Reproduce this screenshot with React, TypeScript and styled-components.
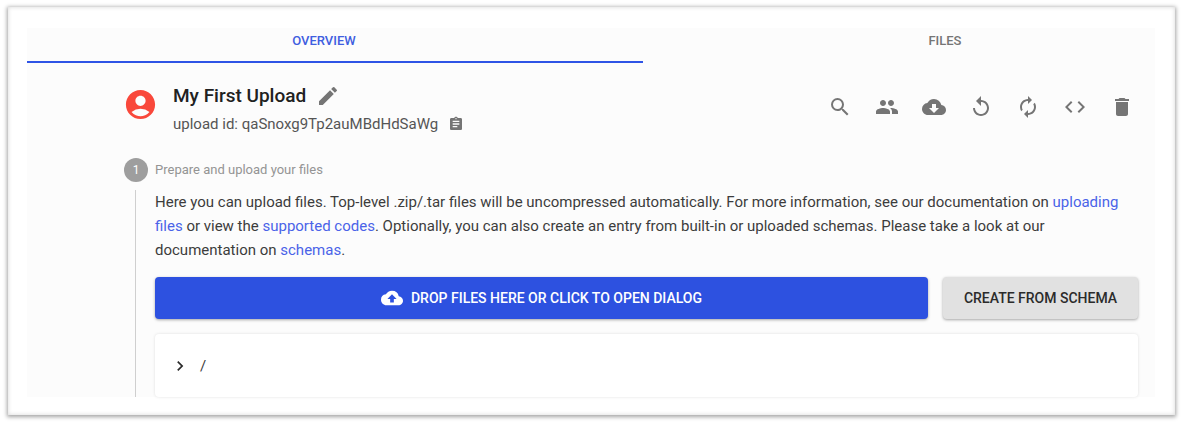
import React from 'react';
import styled, { createGlobalStyle } from 'styled-components';
import {
  MdAccountCircle,
  MdAssignment,
  MdAutorenew,
  MdChevronRight,
  MdCloudDownload,
  MdCloudUpload,
  MdCode,
  MdDelete,
  MdEdit,
  MdPeople,
  MdReplay,
  MdSearch,
} from 'react-icons/md';

const GlobalStyle = createGlobalStyle`
  * { box-sizing: border-box; }
  body {
    margin: 0;
    background: #fff;
    color: #3c3c3c;
    font-family: Roboto, "Noto Sans", sans-serif;
  }
  button { font-family: inherit; cursor: pointer; }
`;

const Shell = styled.div`
  padding: 7px 8px 10px;
`;

const Frame = styled.div`
  padding: 21px 20px 18px 19px;
  background: #fff;
  box-shadow: 0 1px 4px 1px #a4a4a4, inset 0 0 4px #d8d8d8;
`;

const Page = styled.main`
  background: #fcfcfc;
`;

const Tabs = styled.nav`
  display: flex;
`;

const Tab = styled.button<{ $active?: boolean }>`
  width: ${p => (p.$active ? '54.6%' : '45.4%')};
  height: 35px;
  padding: ${p => (p.$active ? '0 22px 8px 0' : '0 0 8px 92px')};
  border: 0;
  border-bottom: 2px solid ${p => (p.$active ? '#2f54e6' : 'transparent')};
  background: none;
  color: ${p => (p.$active ? '#3f5ee0' : '#757575')};
  font-size: 13px;
  font-weight: 500;
  line-height: 18px;
  text-transform: uppercase;
`;

const Content = styled.div`
  padding: 19px 17px 0 97px;
`;

const Header = styled.header`
  display: flex;
  align-items: flex-start;
`;

const Avatar = styled.span`
  display: flex;
  width: 50px;
  margin-left: -1px;
  padding-top: 5px;
  color: #f9483b;
`;

const Heading = styled.div`
  flex: 1;
`;

const TitleRow = styled.div`
  display: flex;
  align-items: center;
  gap: 10px;
  height: 28px;
`;

const Title = styled.h1`
  margin: 0;
  color: #212121;
  font-size: 19px;
  font-weight: 500;
  line-height: 28px;
`;

const IdRow = styled.div`
  display: flex;
  align-items: center;
  gap: 10px;
  height: 28px;
  color: #555;
  font-size: 15px;
`;

const IconButton = styled.button`
  display: flex;
  padding: 0;
  border: 0;
  background: none;
  color: #757575;
`;

const Actions = styled.div`
  display: flex;
  gap: 23px;
  padding: 13px 4px 0 0;
`;

const StepLabel = styled.div`
  display: flex;
  align-items: center;
  gap: 7px;
  margin-top: 20px;
  color: #949494;
  font-size: 13px;
  line-height: 24px;
`;

const StepNumber = styled.span`
  width: 24px;
  height: 24px;
  border-radius: 50%;
  background: #9e9e9e;
  color: #fff;
  font-size: 12px;
  text-align: center;
`;

const StepBody = styled.section`
  margin: 8px 0 0 11px;
  padding-left: 19px;
  border-left: 1px solid #cfcfcf;
`;

const Intro = styled.p`
  margin: 0;
  font-size: 15px;
  line-height: 24px;
`;

const Link = styled.a`
  color: #4a63e8;
  text-decoration: none;
`;

const ButtonRow = styled.div`
  display: flex;
  gap: 15px;
  margin-top: 15px;
`;

const Button = styled.button<{ $primary?: boolean }>`
  display: flex;
  align-items: center;
  justify-content: center;
  gap: 8px;
  flex: ${p => (p.$primary ? '1' : '0 0 195px')};
  height: 42px;
  padding: 0;
  border: 0;
  border-radius: 4px;
  background: ${p => (p.$primary ? '#2d51e0' : '#e1e1e1')};
  color: ${p => (p.$primary ? '#fff' : '#2b2b2b')};
  box-shadow: 0 1px 3px rgba(0, 0, 0, 0.35);
  font-size: 14px;
  font-weight: 500;
  text-transform: uppercase;
`;

const FileCard = styled.div`
  display: flex;
  align-items: center;
  gap: 10px;
  height: 63px;
  margin-top: 15px;
  padding-left: 15px;
  border-radius: 4px;
  background: #fff;
  box-shadow: 0 0 3px rgba(0, 0, 0, 0.12);
  font-size: 15px;
`;

const actions = [
  { label: 'Search', Icon: MdSearch },
  { label: 'Members', Icon: MdPeople },
  { label: 'Download', Icon: MdCloudDownload },
  { label: 'Reload', Icon: MdReplay },
  { label: 'Reprocess', Icon: MdAutorenew },
  { label: 'API', Icon: MdCode },
  { label: 'Delete', Icon: MdDelete },
];

export default function App() {
  return (
    <Shell>
      <GlobalStyle />
      <Frame>
        <Page>
          <Tabs>
            <Tab $active>Overview</Tab>
            <Tab>Files</Tab>
          </Tabs>
          <Content>
            <Header>
              <Avatar><MdAccountCircle size={35} /></Avatar>
              <Heading>
                <TitleRow>
                  <Title>My First Upload</Title>
                  <IconButton aria-label="Edit name"><MdEdit size={24} /></IconButton>
                </TitleRow>
                <IdRow>
                  <span>upload id: qaSnoxg9Tp2auMBdHdSaWg</span>
                  <IconButton aria-label="Copy upload id"><MdAssignment size={16} /></IconButton>
                </IdRow>
              </Heading>
              <Actions>
                {actions.map(({ label, Icon }) => (
                  <IconButton key={label} aria-label={label}><Icon size={24} /></IconButton>
                ))}
              </Actions>
            </Header>
            <StepLabel>
              <StepNumber>1</StepNumber>
              Prepare and upload your files
            </StepLabel>
            <StepBody>
              <Intro>
                Here you can upload files. Top-level .zip/.tar files will be uncompressed
                automatically. For more information, see our documentation on{' '}
                <Link href="#uploading">uploading files</Link> or view the{' '}
                <Link href="#codes">supported codes</Link>. Optionally, you can also create an
                entry from built-in or uploaded schemas. Please take a look at our documentation
                on <Link href="#schemas">schemas</Link>.
              </Intro>
              <ButtonRow>
                <Button $primary><MdCloudUpload size={22} />Drop files here or click to open dialog</Button>
                <Button>Create from schema</Button>
              </ButtonRow>
              <FileCard>
                <IconButton aria-label="Expand folder"><MdChevronRight size={20} color="#2b2b2b" /></IconButton>
                <span>/</span>
              </FileCard>
            </StepBody>
          </Content>
        </Page>
      </Frame>
    </Shell>
  );
}
